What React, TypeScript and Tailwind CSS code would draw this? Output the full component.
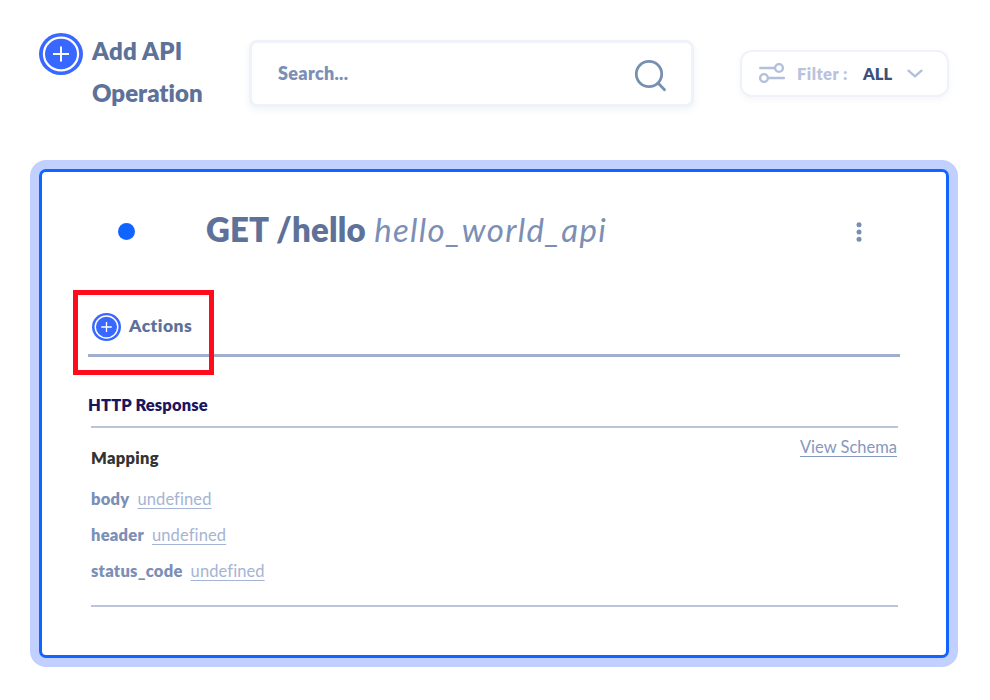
import React from "react";

function PlusBadge({ className }: { className: string }) {
  return (
    <svg viewBox="0 0 44 42" preserveAspectRatio="none" className={className}>
      <ellipse cx="22" cy="21" rx="22" ry="21" fill="#3868ff" />
      <ellipse cx="22" cy="21" rx="17.1" ry="16.4" fill="none" stroke="#fff" strokeWidth="2.2" />
      <path d="M14 21h16M22 13.4v15.2" stroke="#fff" strokeWidth="2" fill="none" />
    </svg>
  );
}

function MappingRow({ name }: { name: string }) {
  return (
    <div className="flex h-9 items-center text-[16.5px] leading-9">
      <span className="font-extrabold tracking-[0.25px] text-[#7b8fb8]">{name}</span>
      <a className="ml-[8px] text-[16.5px] tracking-[0.1px] text-[#a5b4d2] underline decoration-1 underline-offset-[3px]">undefined</a>
    </div>
  );
}

export default function App() {
  return (
    <div className="h-[700px] w-[990px] overflow-hidden bg-white font-['Lato','Liberation_Sans',sans-serif] [font-variant-ligatures:none]">
      <header className="flex h-[160px] items-start">
        <PlusBadge className="mt-[33px] ml-[39px] h-[42px] w-[44px] shrink-0" />
        <h1 className="mt-[30px] ml-[9px] w-[157px] text-[24px] leading-[42px] font-extrabold text-[#5d7199]">
          <span className="tracking-[0.2px]">Add API</span>
          <br />
          <span>Operation</span>
        </h1>
        <div className="mt-[40px] flex h-[67px] w-[445px] shrink-0 justify-between rounded-lg border-[3px] border-[#f0f2f9] bg-white pr-[22px] pl-[26px] shadow-[0_3px_7px_rgba(60,80,130,0.07)]">
          <span className="mt-[20px] text-[18px] leading-[20px] font-extrabold tracking-[0.3px] text-[#7b8fb5]">Search...</span>
          <svg viewBox="0 0 36 36" className="mt-[15px] h-9 w-9" fill="none" stroke="#7790b1" strokeWidth="2.8">
            <circle cx="16" cy="16" r="12.7" />
            <path d="M25.5 25.5L31.5 31.8" strokeLinecap="round" />
          </svg>
        </div>
        <div className="mt-[50px] ml-[46px] flex h-[47px] w-[209px] shrink-0 items-center rounded-xl border-[2px] border-[#f0f2f9] bg-white pl-[17px] shadow-[0_3px_6px_rgba(60,80,130,0.05)]">
          <svg viewBox="0 0 26 20" className="mb-[2px] h-5 w-[26px]" fill="none" stroke="#b3bfdb" strokeWidth="2.4" strokeLinecap="round">
            <path d="M1.3 5H15M10.5 15H25" />
            <circle cx="20" cy="5" r="3.9" />
            <circle cx="5" cy="15" r="3.9" />
          </svg>
          <span className="ml-[12px] w-[66px] text-[16.5px] leading-5 font-extrabold tracking-[0.45px] text-[#b9c3de]">Filter :</span>
          <span className="w-[44px] text-[16.5px] leading-5 font-extrabold text-[#3c4f7d]">ALL</span>
          <svg viewBox="0 0 16 10" className="h-[10px] w-4" fill="none" stroke="#b3bfdb" strokeWidth="2.4" strokeLinecap="round" strokeLinejoin="round">
            <path d="M1.5 1.7L8 7.3L14.5 1.7" />
          </svg>
        </div>
      </header>

      <main className="ml-[30px] h-[507px] w-[928px] rounded-[16px] bg-[#c2d0ff] p-[9px]">
        <section className="h-[489px] w-[910px] rounded-[7px] border-[3px] border-[#1064ff] bg-white">
          <div className="flex h-[118px] items-center pl-[76px]">
            <span className="size-[17px] rounded-full bg-[#1064ff]" />
            <h2 className="mb-[4px] ml-[71px] w-[650px] text-[33px] leading-[40px] whitespace-nowrap text-[#7b8fb5]">
              <b className="font-extrabold tracking-[0.15px] text-[#5d7199]">GET /hello</b> <i className="tracking-[1.3px]">hello_world_api</i>
            </h2>
            <svg viewBox="0 0 6 20" className="mt-[1px] h-5 w-[6px]" fill="#7790b1">
              <circle cx="3" cy="2.7" r="2.5" />
              <circle cx="3" cy="10" r="2.5" />
              <circle cx="3" cy="17.3" r="2.5" />
            </svg>
          </div>

          <div className="relative ml-[46px] flex h-[67px] w-[812px] items-center border-b-[3px] border-[#a1aecc] pl-[4px]">
            <PlusBadge className="mt-[9px] h-[28px] w-[29px]" />
            <span className="mt-[7px] ml-[8px] text-[17.5px] leading-5 font-extrabold tracking-[0.45px] text-[#5d7199]">Actions</span>
            <div className="absolute top-0 -left-[15px] h-[85px] w-[141px] border-[5px] border-[#ff0b1b]" />
          </div>

          <h3 className="mt-[37px] ml-[46px] text-[16.5px] leading-[22px] font-extrabold tracking-[0.13px] text-[#1b155f]">HTTP Response</h3>
          <div className="mt-[10px] ml-[49px] flex h-[181px] w-[807px] justify-between border-y-2 border-[#bac5dc]">
            <div className="pt-[18px]">
              <h4 className="mb-[11px] text-[16.5px] leading-[24px] font-extrabold tracking-[0.3px] text-[#333]">Mapping</h4>
              <MappingRow name="body" />
              <MappingRow name="header" />
              <MappingRow name="status_code" />
            </div>
            <a className="mt-[9px] mr-[1px] h-5 text-[16.5px] leading-5 text-[#8598bd] underline decoration-1 underline-offset-[3px]">View Schema</a>
          </div>
        </section>
      </main>
    </div>
  );
}
